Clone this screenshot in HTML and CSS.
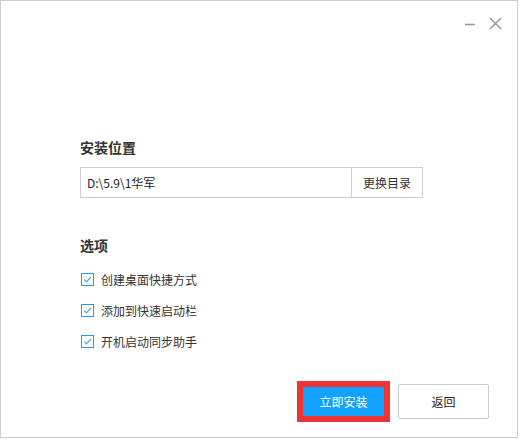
FILE: index.html
```html
<!DOCTYPE html>
<html lang="zh-CN">
<head>
<meta charset="utf-8">
<title>安装</title>
<link rel="stylesheet" href="styles.css">
</head>
<body>
<div class="window">
  <div class="titlebar">
    <button class="win-btn" aria-label="最小化">
      <svg width="12" height="12" viewBox="0 0 12 12"><path d="M1 6.5h10" stroke="#9a9a9a" stroke-width="1.6"/></svg>
    </button>
    <button class="win-btn" aria-label="关闭">
      <svg width="13" height="13" viewBox="0 0 13 13"><path d="M1 1l11 11M12 1L1 12" stroke="#9a9a9a" stroke-width="1.5"/></svg>
    </button>
  </div>

  <div class="main">
    <h2 class="section-title">安装位置</h2>
    <div class="path-field">
      <input class="path-input" type="text" value="D:\5.9\1华军">
      <button class="path-btn">更换目录</button>
    </div>

    <h2 class="section-title options-title">选项</h2>
    <ul class="options">
      <li class="option">
        <svg class="check" width="13" height="13" viewBox="0 0 13 13"><rect x="0.5" y="0.5" width="12" height="12" fill="#fff" stroke="#2b9ade"/><path d="M3.3 6.6l2.2 2.2 4.3-4.6" fill="none" stroke="#2b9ade" stroke-width="1.1"/></svg>
        <span>创建桌面快捷方式</span>
      </li>
      <li class="option">
        <svg class="check" width="13" height="13" viewBox="0 0 13 13"><rect x="0.5" y="0.5" width="12" height="12" fill="#fff" stroke="#2b9ade"/><path d="M3.3 6.6l2.2 2.2 4.3-4.6" fill="none" stroke="#2b9ade" stroke-width="1.1"/></svg>
        <span>添加到快速启动栏</span>
      </li>
      <li class="option">
        <svg class="check" width="13" height="13" viewBox="0 0 13 13"><rect x="0.5" y="0.5" width="12" height="12" fill="#fff" stroke="#2b9ade"/><path d="M3.3 6.6l2.2 2.2 4.3-4.6" fill="none" stroke="#2b9ade" stroke-width="1.1"/></svg>
        <span>开机启动同步助手</span>
      </li>
    </ul>
  </div>

  <div class="actions">
    <button class="btn btn-primary">立即安装</button>
    <button class="btn btn-default">返回</button>
  </div>
</div>
</body>
</html>
```

FILE: styles.css
```css
* {
  box-sizing: border-box;
}

html, body {
  margin: 0;
  padding: 0;
  background: #ffffff;
}

body {
  font-family: "Noto Sans CJK SC", "Noto Sans", sans-serif;
  color: #333333;
  font-size: 12px;
}

.window {
  width: 518px;
  height: 438px;
  border: 1px solid #cdcdcd;
  background: #ffffff;
  display: flex;
  flex-direction: column;
}

/* title bar with minimise / close */
.titlebar {
  height: 46px;
  display: flex;
  justify-content: flex-end;
  align-items: flex-start;
  padding: 16px 15px 0 0;
  gap: 13px;
}

.win-btn {
  border: 0;
  padding: 0;
  background: transparent;
  display: flex;
  width: 13px;
  height: 13px;
  align-items: center;
  justify-content: center;
  cursor: pointer;
}

.main {
  padding: 90px 0 0 79px;
}

.section-title {
  margin: 0;
  font-size: 14px;
  font-weight: bold;
  line-height: 20px;
  color: #333333;
}

.options-title {
  margin-top: 37px;
}

.path-field {
  margin-top: 10px;
  display: flex;
  width: 343px;
  height: 31px;
  border: 1px solid #cfcfcf;
}

.path-input {
  flex: 1;
  min-width: 0;
  border: 0;
  outline: none;
  padding: 0 6px;
  font-family: inherit;
  font-size: 12px;
  color: #222222;
  background: #ffffff;
}

.path-btn {
  width: 71px;
  border: 0;
  border-left: 1px solid #cfcfcf;
  background: #ffffff;
  font-family: inherit;
  font-size: 12px;
  color: #333333;
  padding: 0;
}

.options {
  list-style: none;
  margin: 14px 0 0;
  padding: 0;
  display: flex;
  flex-direction: column;
  gap: 11px;
}

.option {
  display: flex;
  align-items: center;
  height: 20px;
  gap: 7px;
  padding-left: 1px;
}

.check {
  display: block;
  flex: none;
}

.actions {
  margin-top: auto;
  display: flex;
  justify-content: flex-end;
  align-items: center;
  gap: 14px;
  padding: 0 28px 18px 0;
}

.btn {
  font-family: inherit;
  font-size: 12px;
  padding: 0;
  cursor: pointer;
}

.btn-primary {
  width: 81px;
  height: 29px;
  border: 0;
  background: #12a1ff;
  color: #ffffff;
  outline: 6px solid #ee3434;
}

.btn-default {
  width: 91px;
  height: 35px;
  border: 1px solid #cccccc;
  border-radius: 2px;
  background: #ffffff;
  color: #222222;
}
```
